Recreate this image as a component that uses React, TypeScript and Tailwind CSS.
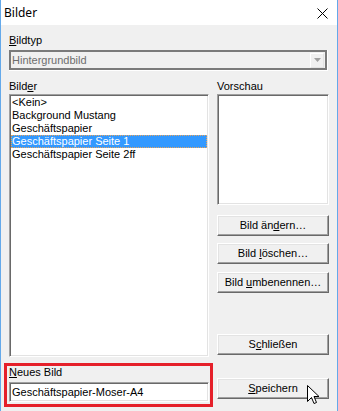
import React from 'react';

const ui = "font-['Liberation_Sans',Arial,sans-serif] text-[11px] leading-[13px] text-black";

const sunken =
  'border border-t-[#a0a0a0] border-l-[#a0a0a0] border-b-white border-r-white shadow-[inset_1px_1px_0_#696969,inset_-1px_-1px_0_#e3e3e3]';

const raised =
  'border border-t-white border-l-white border-b-[#696969] border-r-[#696969] shadow-[inset_-1px_-1px_0_#a0a0a0,inset_1px_1px_0_#e3e3e3] bg-[#f0f0f0]';

function Btn({ children, className = '' }: { children: React.ReactNode; className?: string }) {
  return (
    <div className={`${raised} h-[21px] w-[112px] flex items-center justify-center ${className}`}>
      <span>{children}</span>
    </div>
  );
}

const items = [
  '<Kein>',
  'Background Mustang',
  'Geschäftspapier',
  'Geschäftspapier Seite 1',
  'Geschäftspapier Seite 2ff',
];

export default function App() {
  return (
    <div className={`${ui} w-[338px] h-[411px] flex flex-col bg-[#f0f0f0] border-x border-[#64a9ea] relative overflow-hidden`}>
      {/* title bar */}
      <div className="h-[25px] bg-white flex items-center justify-between pl-[3px] pr-[9px] shrink-0">
        <span className="font-['Noto_Sans',sans-serif] text-[12px] leading-[16px] text-black">Bilder</span>
        <svg width="11" height="11" viewBox="0 0 11 11" className="mt-[1px]">
          <path d="M0.5 0.5 L10.5 10.5 M10.5 0.5 L0.5 10.5" stroke="#000" strokeWidth="1" />
        </svg>
      </div>

      <div className="flex flex-col pl-[8px]">
        <div className="mt-[9px] h-[13px]">
          <u>B</u>ildtyp
        </div>
        {/* disabled combobox */}
        <div className="mt-[3px] w-[319px] h-[21px] border-b border-r border-white">
          <div className="h-full border-2 border-[#7a7a7a] flex items-center justify-between pl-[1px] pr-[1px]">
            <span className="text-[#6d6d6d]">Hintergrundbild</span>
            <div className="w-[14px] h-[15px] border border-white border-b-[#e3e3e3] border-r-[#e3e3e3] flex items-center justify-center">
              <svg width="7" height="4" viewBox="0 0 7 4">
                <path d="M0 0 H7 L3.5 4 Z" fill="#a0a0a0" />
              </svg>
            </div>
          </div>
        </div>

        <div className="flex gap-[8px] mt-[9px]">
          {/* left column */}
          <div className="flex flex-col w-[200px]">
            <div className="h-[13px]">
              Bild<u>e</u>r
            </div>
            <div className={`${sunken} mt-[1px] h-[263px] bg-white p-[1px]`}>
              {items.map((t, i) => (
                <div
                  key={t}
                  className={
                    i === 3
                      ? 'h-[13px] bg-[#3399ff] text-white border border-dotted border-[#e7a45c] leading-[11px] px-0'
                      : 'h-[13px] border border-transparent leading-[11px]'
                  }
                >
                  {t}
                </div>
              ))}
            </div>
            {/* annotated new picture box */}
            <div className="mt-[6px] -ml-[5px] w-[209px] border-[3px] border-[#e5202a] pl-[2px] pr-[1px] pb-[2px]">
              <div className="h-[13px] pl-[0px]">
                <u>N</u>eues Bild
              </div>
              <div className={`${sunken} mt-[3px] h-[20px] bg-white flex items-center pl-[2px]`}>
                Geschäftspapier-Moser-A4
              </div>
            </div>
          </div>

          {/* right column */}
          <div className="flex flex-col w-[112px]">
            <div className="h-[13px]">Vorschau</div>
            <div className={`${sunken} mt-[1px] h-[111px] bg-white`} />
            <Btn className="mt-[10px]">
              Bild än<u>d</u>ern…
            </Btn>
            <Btn className="mt-[7px]">
              Bild <u>l</u>öschen…
            </Btn>
            <Btn className="mt-[8px]">
              Bild <u>u</u>mbenennen…
            </Btn>
            <Btn className="mt-[41px]">
              S<u>c</u>hließen
            </Btn>
            <Btn className="mt-[23px]">
              <u>S</u>peichern
            </Btn>
          </div>
        </div>
      </div>

      {/* mouse cursor */}
      <svg
        width="13"
        height="20"
        viewBox="0 0 13 20"
        className="absolute left-[306px] top-[385px]"
      >
        <path
          d="M0.5 0.5 L0.5 16.5 L4.5 12.5 L7 18.5 L9.5 17.5 L7 11.5 L12 11.5 Z"
          fill="#fff"
          stroke="#000"
          strokeWidth="1"
          strokeLinejoin="miter"
        />
      </svg>
    </div>
  );
}
